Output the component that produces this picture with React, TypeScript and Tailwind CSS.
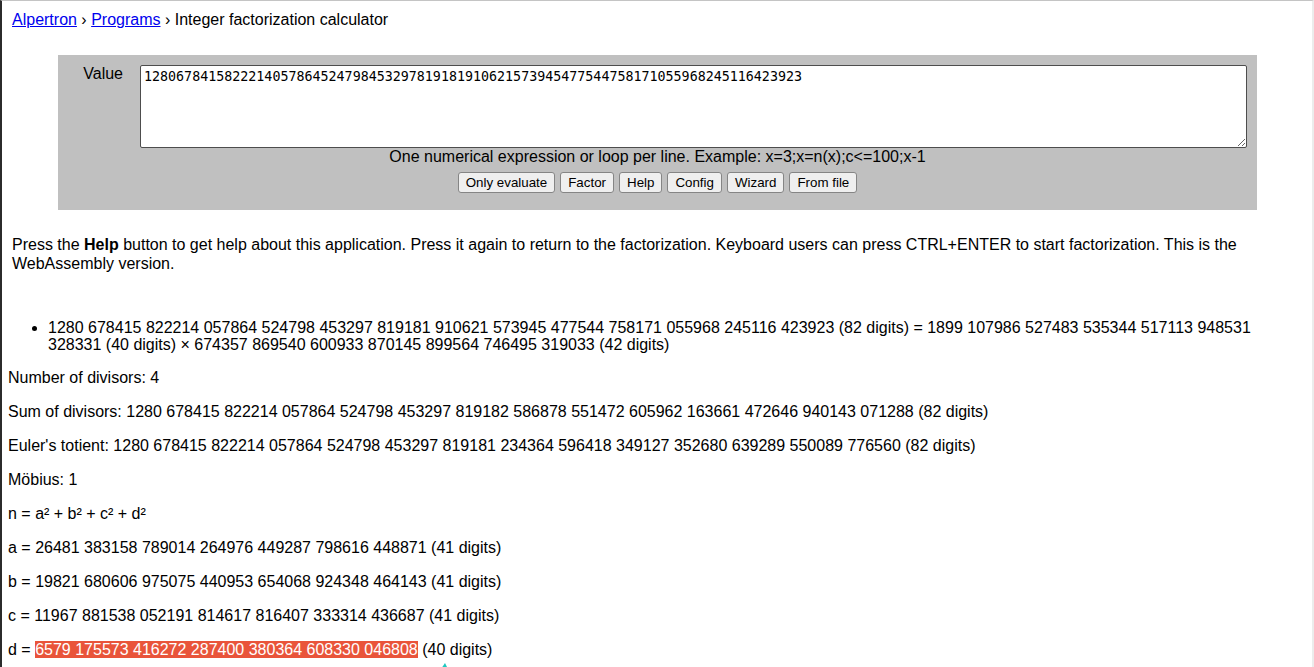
import React from 'react';

const sans = "font-['Liberation_Sans',Arial,'Noto_Sans',sans-serif]";

// resultados de la factorización
const lines: React.ReactNode[] = [
  'Number of divisors: 4',
  'Sum of divisors: 1280 678415 822214 057864 524798 453297 819182 586878 551472 605962 163661 472646 940143 071288 (82 digits)',
  "Euler's totient: 1280 678415 822214 057864 524798 453297 819181 234364 596418 349127 352680 639289 550089 776560 (82 digits)",
  'Möbius: 1',
  'n = a² + b² + c² + d²',
  'a = 26481 383158 789014 264976 449287 798616 448871 (41 digits)',
  'b = 19821 680606 975075 440953 654068 924348 464143 (41 digits)',
  'c = 11967 881538 052191 814617 816407 333314 436687 (41 digits)',
];

const buttons = ['Only evaluate', 'Factor', 'Help', 'Config', 'Wizard', 'From file'];

function App() {
  return (
    <div
      className={`relative h-[667px] overflow-hidden bg-white text-black text-[16px] leading-[18px] border-l-2 border-l-[#2b2b2b] border-t border-t-[#c4c4c4] border-r-2 border-r-[#ececec] ${sans}`}
    >
      {/* breadcrumb */}
      <div className="px-[10px] pt-[10px]">
        <a href="#" className="text-[#0000ee] underline">Alpertron</a>
        {' › '}
        <a href="#" className="text-[#0000ee] underline">Programs</a>
        {' › Integer factorization calculator'}
      </div>

      {/* input box */}
      <div className="ml-[56px] mt-[26px] w-[1199px] bg-[#c0c0c0] pt-[10px] pb-[17px]">
        <div className="flex items-start">
          <label className="w-[82px] pr-[17px] text-right">Value</label>
          <textarea
            className="w-[1107px] h-[83px] bg-white border border-[#4d4d4d] rounded-[2px] px-[3px] py-[3px] font-['DejaVu_Sans_Mono',monospace] text-[13.33px] leading-[15px] outline-none"
            defaultValue="1280678415822214057864524798453297819181910621573945477544758171055968245116423923"
          />
        </div>
        <div className="text-center">
          One numerical expression or loop per line. Example: x=3;x=n(x);c&lt;=100;x-1
        </div>
        <div className="flex justify-center gap-[5px] mt-[6px]">
          {buttons.map(b => (
            <button
              key={b}
              type="button"
              className="h-[21px] px-[7px] bg-[#efefef] border border-[#858585] rounded-[3px] text-[13.33px] leading-[15px]"
            >
              {b}
            </button>
          ))}
        </div>
      </div>

      <p className="px-[10px] mt-[25px] leading-[19px]">
        Press the <b>Help</b> button to get help about this application. Press it again to return to the factorization. Keyboard users can press CTRL+ENTER to start factorization. This is the
        <br />
        WebAssembly version.
      </p>

      {/* results */}
      <div className="px-[6px]">
        <ul className="list-disc pl-[40px] mt-[46px] leading-[17px]">
          <li>
            1280 678415 822214 057864 524798 453297 819181 910621 573945 477544 758171 055968 245116 423923 (82 digits) = 1899 107986 527483 535344 517113 948531
            <br />
            328331 (40 digits) × 674357 869540 600933 870145 899564 746495 319033 (42 digits)
          </li>
        </ul>
        {lines.map((l, i) => (
          <p key={i} className="mt-[16px] whitespace-nowrap">{l}</p>
        ))}
        <p className="mt-[16px] whitespace-nowrap">
          d = <span className="bg-[#e9543a] text-white">6579 175573 416272 287400 380364 608330 046808</span> (40 digits)
        </p>
      </div>

      {/* floating widget peeking from the bottom */}
      <svg className="absolute left-[434px] top-[660px]" width="16" height="8" viewBox="0 0 16 8">
        <circle cx="8" cy="10" r="8" fill="#ffffff" />
        <path d="M5 8 L9 2 L12 8 Z" fill="#1ec8c0" />
      </svg>
    </div>
  );
}

export default App;
